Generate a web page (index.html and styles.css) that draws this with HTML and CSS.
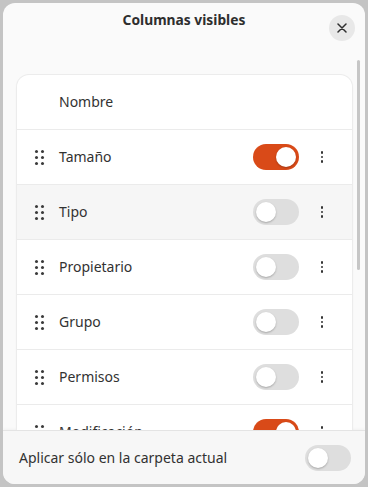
FILE: index.html
```html
<!DOCTYPE html>
<html lang="es">
<head>
<meta charset="utf-8">
<title>Columnas visibles</title>
<link rel="stylesheet" href="styles.css">
</head>
<body>
<div class="window">
  <header class="header">
    <div></div>
    <h1 class="title">Columnas visibles</h1>
    <button class="close" aria-label="Cerrar">
      <svg width="10" height="10" viewBox="0 0 10 10"><path d="M1 1 L9 9 M9 1 L1 9" stroke="#2e2e2e" stroke-width="1.5" stroke-linecap="round"/></svg>
    </button>
  </header>
  <div class="scroller">
    <div class="card">
      <div class="row">
        <span class="handle-space"></span>
        <span class="label">Nombre</span>
      </div>
      <div class="row">
        <span class="handle"><i></i><i></i><i></i><i></i><i></i><i></i></span>
        <span class="label">Tamaño</span>
        <span class="switch on"><span class="knob"></span></span>
        <span class="menu"><i></i><i></i><i></i></span>
      </div>
      <div class="row hover">
        <span class="handle"><i></i><i></i><i></i><i></i><i></i><i></i></span>
        <span class="label">Tipo</span>
        <span class="switch"><span class="knob"></span></span>
        <span class="menu"><i></i><i></i><i></i></span>
      </div>
      <div class="row">
        <span class="handle"><i></i><i></i><i></i><i></i><i></i><i></i></span>
        <span class="label">Propietario</span>
        <span class="switch"><span class="knob"></span></span>
        <span class="menu"><i></i><i></i><i></i></span>
      </div>
      <div class="row">
        <span class="handle"><i></i><i></i><i></i><i></i><i></i><i></i></span>
        <span class="label">Grupo</span>
        <span class="switch"><span class="knob"></span></span>
        <span class="menu"><i></i><i></i><i></i></span>
      </div>
      <div class="row">
        <span class="handle"><i></i><i></i><i></i><i></i><i></i><i></i></span>
        <span class="label">Permisos</span>
        <span class="switch"><span class="knob"></span></span>
        <span class="menu"><i></i><i></i><i></i></span>
      </div>
      <div class="row">
        <span class="handle"><i></i><i></i><i></i><i></i><i></i><i></i></span>
        <span class="label">Modificación</span>
        <span class="switch on"><span class="knob"></span></span>
        <span class="menu"><i></i><i></i><i></i></span>
      </div>
    </div>
    <div class="scrollbar"></div>
  </div>
  <footer class="footer">
    <span class="footer-label">Aplicar sólo en la carpeta actual</span>
    <span class="switch"><span class="knob"></span></span>
  </footer>
</div>
</body>
</html>
```
FILE: styles.css
```css
* { box-sizing: border-box; }
html, body { margin: 0; padding: 0; }
body {
  width: 368px;
  height: 487px;
  background: #c4c4c4;
  padding: 3px;
  font-family: "Noto Sans", "DejaVu Sans", sans-serif;
  color: #323232;
  overflow: hidden;
}
.window {
  width: 362px;
  height: 481px;
  background: #fafafa;
  border-radius: 12px;
  display: flex;
  flex-direction: column;
  overflow: hidden;
}
.header {
  display: grid;
  grid-template-columns: 1fr auto 1fr;
  align-items: start;
  height: 45px;
  flex: none;
}
.title {
  margin: 8px 0 0 0;
  font-size: 13.8px;
  line-height: 18px;
  font-weight: 700;
  color: #2e2e2e;
}
.close {
  justify-self: end;
  margin: 12px 10px 0 0;
  width: 26px;
  height: 26px;
  border-radius: 50%;
  border: none;
  background: #e8e8e8;
  display: flex;
  align-items: center;
  justify-content: center;
  padding: 0;
}
.scroller {
  flex: 1;
  position: relative;
  overflow: hidden;
  padding: 27px 13px 0 14px;
}
.scrollbar {
  position: absolute;
  right: 5px;
  top: 12px;
  width: 3px;
  height: 210px;
  border-radius: 2px;
  background: #c6c6c6;
}
.card {
  background: #ffffff;
  border-radius: 12px;
  box-shadow: 0 0 0 1px #ececec, 0 1px 3px rgba(0,0,0,0.06);
}
.row {
  height: 55px;
  display: flex;
  align-items: center;
  padding: 0 18px;
  border-top: 1px solid #ebebeb;
}
.row:first-child {
  border-top: none;
  height: 54px;
  border-radius: 12px 12px 0 0;
}
.row.hover { background: #f6f6f6; }
.handle, .handle-space {
  width: 8px;
  flex: none;
  margin-right: 16px;
}
.handle {
  display: grid;
  grid-template-columns: 3px 3px;
  grid-auto-rows: 3px;
  column-gap: 3px;
  row-gap: 3px;
  height: 15px;
  width: 9px;
  margin-right: 15px;
}
.handle i {
  display: block;
  background: #3a3a3a;
  border-radius: 50%;
}
.label {
  flex: 1;
  font-size: 14px;
  line-height: 18px;
}
.switch {
  flex: none;
  width: 46px;
  height: 26px;
  border-radius: 13px;
  background: #dedede;
  display: flex;
  align-items: center;
  padding: 3px;
}
.switch .knob {
  width: 20px;
  height: 20px;
  border-radius: 50%;
  background: #ffffff;
  box-shadow: 0 1px 2px rgba(0,0,0,0.25);
}
.switch.on {
  background: #d94a18;
  justify-content: flex-end;
}
.menu {
  flex: none;
  width: 24px;
  margin-left: 11px;
  display: flex;
  flex-direction: column;
  align-items: center;
  gap: 2px;
}
.menu i {
  display: block;
  width: 2.5px;
  height: 2.5px;
  border-radius: 50%;
  background: #333333;
}
.footer {
  flex: none;
  height: 54px;
  display: flex;
  align-items: center;
  justify-content: space-between;
  padding: 0 14px 0 16px;
  background: #f7f7f7;
  border-top: 1px solid #e4e4e4;
  box-shadow: 0 -1px 3px rgba(0,0,0,0.04);
}
.footer-label {
  font-size: 14px;
  line-height: 18px;
}
```
